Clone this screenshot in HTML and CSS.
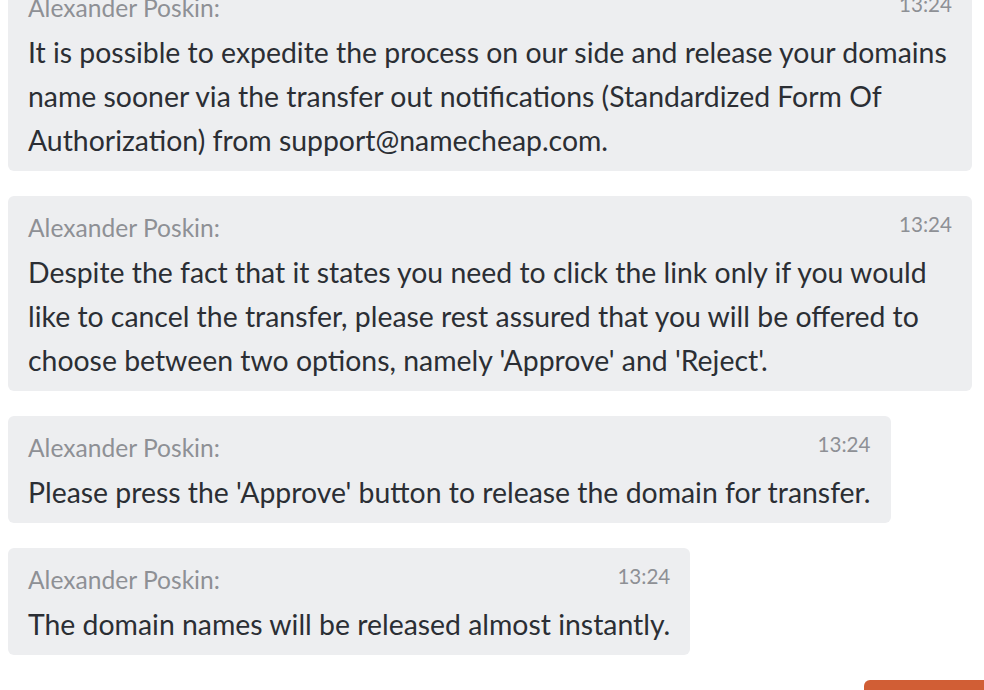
FILE: index.html
```html
<!DOCTYPE html>
<html>
<head>
<meta charset="utf-8">
<link rel="stylesheet" href="styles.css">
</head>
<body>
<main class="chat">
  <div class="messages">
    <div class="bubble">
      <div class="bubble-head"><span class="author">Alexander Poskin:</span><span class="time">13:24</span></div>
      <div class="text">It is possible to expedite the process on our side and release your domains name sooner via the transfer out notifications (Standardized Form Of Authorization) from support@namecheap.com.</div>
    </div>
    <div class="bubble">
      <div class="bubble-head"><span class="author">Alexander Poskin:</span><span class="time">13:24</span></div>
      <div class="text">Despite the fact that it states you need to click the link only if you would like to cancel the transfer, please rest assured that you will be offered to choose between two options, namely 'Approve' and 'Reject'.</div>
    </div>
    <div class="bubble">
      <div class="bubble-head"><span class="author">Alexander Poskin:</span><span class="time">13:24</span></div>
      <div class="text">Please press the 'Approve' button to release the domain for transfer.</div>
    </div>
    <div class="bubble">
      <div class="bubble-head"><span class="author">Alexander Poskin:</span><span class="time">13:24</span></div>
      <div class="text">The domain names will be released almost instantly.</div>
    </div>
  </div>
  <div class="actions">
    <button class="action-btn" type="button"></button>
  </div>
</main>
</body>
</html>
```
FILE: styles.css
```css
html, body {
  margin: 0;
  padding: 0;
  background: #ffffff;
  overflow: hidden;
}
body {
  font-family: "Lato", "Noto Sans", sans-serif;
  color: #2b2e34;
}
.chat {
  padding: 0 12px 0 8px;
}
.messages {
  display: flex;
  flex-direction: column;
  align-items: flex-start;
  gap: 25px;
  margin-top: -24px;
}
.bubble {
  box-sizing: border-box;
  max-width: 100%;
  background: #edeef0;
  border-radius: 6px;
  padding: 15px 20px 9px 20px;
}
.bubble-head {
  display: flex;
  justify-content: space-between;
  align-items: flex-start;
  gap: 20px;
}
.author {
  font-size: 24.6px;
  line-height: 34px;
  color: #8e9095;
}
.time {
  font-size: 20.6px;
  line-height: 26px;
  color: #8e9095;
}
.text {
  margin-top: 5px;
  font-size: 28.4px;
  line-height: 44px;
  color: #2b2e34;
}
.actions {
  display: flex;
  justify-content: flex-end;
  margin-top: 25px;
  margin-right: -12px;
}
.action-btn {
  width: 120px;
  height: 40px;
  border: 0;
  padding: 0;
  background: #d15e35;
  border-radius: 6px 0 0 0;
}
```
